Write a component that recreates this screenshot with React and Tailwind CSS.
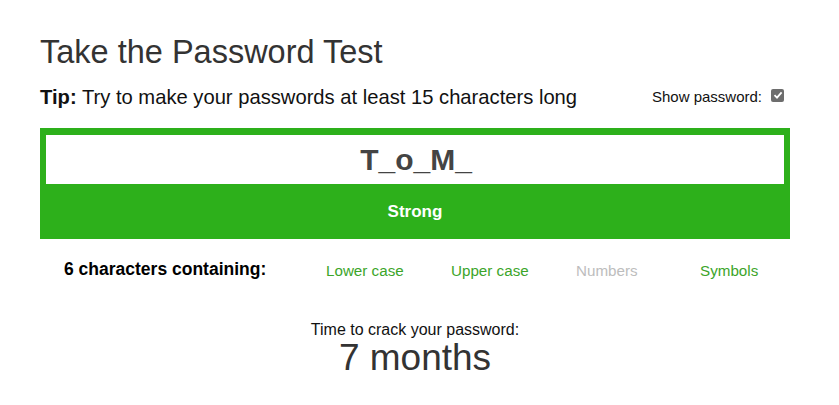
export default function App() {
  return (
    <div className="w-[839px] h-[405px] bg-white font-['Liberation_Sans',Arial,sans-serif] text-[#222]">
      <div className="ml-[40px] w-[750px] pt-[34px]">
        <h1 className="text-[32.5px] leading-[37px] text-[#333]">Take the Password Test</h1>
        <div className="mt-[14px] flex items-center justify-between h-[24px]">
          <p className="text-[20.2px] leading-[24px] text-[#111]">
            <span className="font-bold">Tip:</span> Try to make your passwords at least 15 characters long
          </p>
          <div className="flex items-center gap-[9px] mr-[6px] text-[15px] text-[#111]">
            <span>Show password:</span>
            <span className="w-[13px] h-[13px] rounded-[2px] bg-[#6d6d6d] flex items-center justify-center mb-[4px]">
              <svg width="10" height="10" viewBox="0 0 10 10">
                <path d="M1.5 5.2 L4 7.6 L8.6 2.4" fill="none" stroke="white" strokeWidth="1.8" />
              </svg>
            </span>
          </div>
        </div>
        <div className="mt-[19px] bg-[#2db01b] pt-[7px] px-[6px]">
          <div className="bg-white h-[49px] flex items-center justify-center">
            <span className="font-bold text-[30px] text-[#444] pl-[2px]">T_o_M_</span>
          </div>
          <div className="h-[55px] flex items-center justify-center text-white font-bold text-[17px]">Strong</div>
        </div>
        <div className="mt-[20px] flex items-center h-[24px]">
          <div className="w-[286px] pl-[24px] font-bold text-[17.5px] text-black pb-[3px]">6 characters containing:</div>
          <div className="w-[125px] text-[15.2px] text-[#3ca52a]">Lower case</div>
          <div className="w-[125px] text-[15.2px] text-[#3ca52a]">Upper case</div>
          <div className="w-[124px] text-[15.2px] text-[#bdbdbd]">Numbers</div>
          <div className="text-[15.2px] text-[#3ca52a]">Symbols</div>
        </div>
        <div className="mt-[38px] flex flex-col items-center">
          <div className="text-[16px] leading-[18px] text-[#111]">Time to crack your password:</div>
          <div className="text-[37px] leading-[38px] text-[#333]">7 months</div>
        </div>
      </div>
    </div>
  );
}
